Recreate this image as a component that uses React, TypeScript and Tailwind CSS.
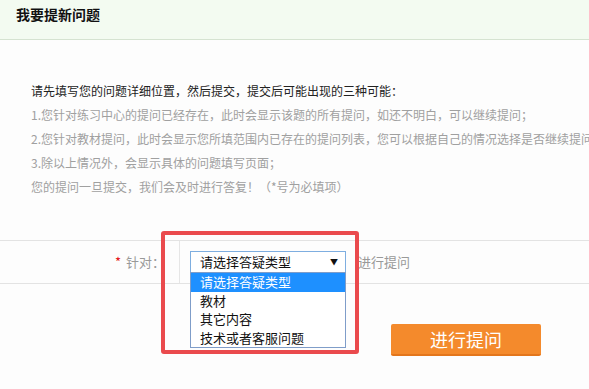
import React from "react";

const tips = [
  "1.您针对练习中心的提问已经存在，此时会显示该题的所有提问，如还不明白，可以继续提问；",
  "2.您针对教材提问，此时会显示您所填范围内已存在的提问列表，您可以根据自己的情况选择是否继续提问；",
  "3.除以上情况外，会显示具体的问题填写页面；",
  "您的提问一旦提交，我们会及时进行答复！（*号为必填项）",
];

const options = ["请选择答疑类型", "教材", "其它内容", "技术或者客服问题"];

export default function App() {
  return (
    <div
      className="w-[589px] h-[389px] overflow-hidden bg-[#fdfdfd] relative"
      style={{ fontFamily: '"Noto Sans CJK SC", "Liberation Sans", sans-serif' }}
    >
      <div className="h-[40px] bg-[#f3fbf1] border-b border-[#d5e3d1] pl-[16px] pt-[5px]">
        <h1 className="text-[14px] font-bold text-[#111] leading-[18px]">我要提新问题</h1>
      </div>

      <div className="pl-[31px] pt-[39px] text-[12px] leading-[24px] whitespace-nowrap">
        <p className="text-[#222]">请先填写您的问题详细位置，然后提交，提交后可能出现的三种可能：</p>
        {tips.map((t, i) => (
          <p key={i} className="text-[#a0a0a0]">
            {t}
          </p>
        ))}
      </div>

      <div className="mt-[41px] flex h-[44px] border-y border-[#e3e3e3]">
        <div className="w-[180px] border-r border-[#e6e6e6] flex items-center justify-end pr-[14px] text-[13px] text-[#999]">
          <span className="text-[#e4131b] mr-[5px] text-[13px]">*</span>
          <span>针对：</span>
        </div>
        <div className="flex items-center pl-[10px]">
          <div className="relative">
            <div className="w-[156px] h-[22px] border border-[#7eaee0] bg-white flex items-center justify-between pl-[9px] pr-[7px] text-[13px] text-[#111]">
              <span>请选择答疑类型</span>
              <span className="text-[8px]">▼</span>
            </div>
            <div className="absolute left-0 top-[21px] w-[156px] border border-[#7f9dc9] bg-white z-10 text-[13px] leading-[18.5px] text-[#111]">
              {options.map((o, i) => (
                <div key={o} className={i === 0 ? "bg-[#1e90ff] text-white pl-[9px]" : "pl-[9px]"}>
                  {o}
                </div>
              ))}
            </div>
          </div>
          <span className="ml-[12px] text-[13px] text-[#999]">进行提问</span>
        </div>
      </div>

      <div className="pl-[391px] pt-[40px]">
        <button className="w-[150px] h-[32px] bg-[#f48a2c] border-b-2 border-[#e3761c] rounded-[2px] text-white text-[18px] leading-[30px]">
          进行提问
        </button>
      </div>

      <div className="absolute left-[161px] top-[231px] w-[198px] h-[123px] border-[4px] border-[#ea4a4d] rounded-[3px] pointer-events-none z-20" />
    </div>
  );
}
